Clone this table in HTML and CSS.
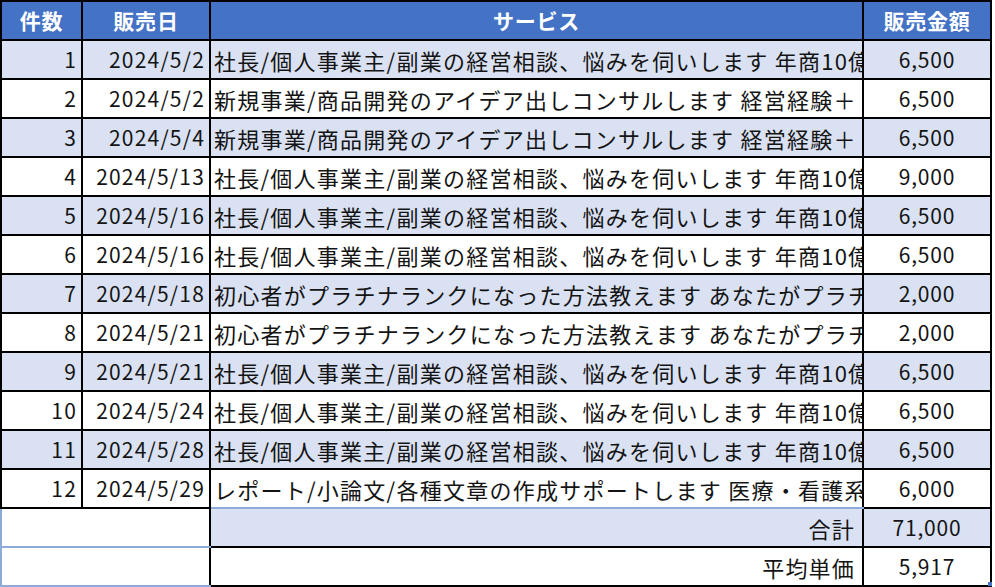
FILE: index.html
```html
<!DOCTYPE html>
<html lang="ja">
<head>
<meta charset="utf-8">
<link rel="stylesheet" href="styles.css">
</head>
<body>
<div class="sheet">
<table class="sales">
  <colgroup>
    <col class="c-no"><col class="c-date"><col class="c-svc"><col class="c-amt">
  </colgroup>
  <thead>
    <tr><th>件数</th><th>販売日</th><th>サービス</th><th>販売金額</th></tr>
  </thead>
  <tbody>
    <tr class="band"><td class="num">1</td><td class="num">2024/5/2</td><td class="svc">社長/個人事業主/副業の経営相談、悩みを伺いします 年商10億円の社長が相談に乗ります</td><td class="amt">6,500</td></tr>
    <tr><td class="num">2</td><td class="num">2024/5/2</td><td class="svc">新規事業/商品開発のアイデア出しコンサルします 経営経験＋ 20年以上</td><td class="amt">6,500</td></tr>
    <tr class="band"><td class="num">3</td><td class="num">2024/5/4</td><td class="svc">新規事業/商品開発のアイデア出しコンサルします 経営経験＋ 20年以上</td><td class="amt">6,500</td></tr>
    <tr><td class="num">4</td><td class="num">2024/5/13</td><td class="svc">社長/個人事業主/副業の経営相談、悩みを伺いします 年商10億円の社長が相談に乗ります</td><td class="amt">9,000</td></tr>
    <tr class="band"><td class="num">5</td><td class="num">2024/5/16</td><td class="svc">社長/個人事業主/副業の経営相談、悩みを伺いします 年商10億円の社長が相談に乗ります</td><td class="amt">6,500</td></tr>
    <tr><td class="num">6</td><td class="num">2024/5/16</td><td class="svc">社長/個人事業主/副業の経営相談、悩みを伺いします 年商10億円の社長が相談に乗ります</td><td class="amt">6,500</td></tr>
    <tr class="band"><td class="num">7</td><td class="num">2024/5/18</td><td class="svc">初心者がプラチナランクになった方法教えます あなたがプラチナランクに</td><td class="amt">2,000</td></tr>
    <tr><td class="num">8</td><td class="num">2024/5/21</td><td class="svc">初心者がプラチナランクになった方法教えます あなたがプラチナランクに</td><td class="amt">2,000</td></tr>
    <tr class="band"><td class="num">9</td><td class="num">2024/5/21</td><td class="svc">社長/個人事業主/副業の経営相談、悩みを伺いします 年商10億円の社長が相談に乗ります</td><td class="amt">6,500</td></tr>
    <tr><td class="num">10</td><td class="num">2024/5/24</td><td class="svc">社長/個人事業主/副業の経営相談、悩みを伺いします 年商10億円の社長が相談に乗ります</td><td class="amt">6,500</td></tr>
    <tr class="band"><td class="num">11</td><td class="num">2024/5/28</td><td class="svc">社長/個人事業主/副業の経営相談、悩みを伺いします 年商10億円の社長が相談に乗ります</td><td class="amt">6,500</td></tr>
    <tr class="last"><td class="num">12</td><td class="num">2024/5/29</td><td class="svc svc-last">レポート/小論文/各種文章の作成サポートします 医療・看護系もお任せください</td><td class="amt">6,000</td></tr>
    <tr class="sum band-sum"><td class="blank" colspan="2"></td><td class="label label-top">合計</td><td class="amt">71,000</td></tr>
    <tr class="sum"><td class="blank" colspan="2"></td><td class="label">平均単価</td><td class="amt">5,917</td></tr>
  </tbody>
</table>
<span class="handle"></span>
</div>
</body>
</html>
```

FILE: styles.css
```css
html, body {
  margin: 0;
  padding: 0;
  background: #ffffff;
}

.sheet {
  position: relative;
  width: 995px;
  height: 587px;
  overflow: hidden;
}

.sales {
  border-collapse: collapse;
  table-layout: fixed;
  width: 992px;
  font-family: "Noto Sans CJK JP", "Noto Sans", sans-serif;
  font-size: 21px;
  color: #141414;
}

.c-no { width: 81px; }
.c-date { width: 128px; }
.c-svc { width: 653px; }
.c-amt { width: 128px; }

.sales th,
.sales td {
  height: 37px;
  padding: 0;
  border: 2px solid #000;
  white-space: nowrap;
  overflow: hidden;
  line-height: 1;
  vertical-align: middle;
}

.sales th {
  background: #4472c4;
  color: #ffffff;
  font-weight: 700;
  text-align: center;
  letter-spacing: 0.8px;
}

.sales tr.band td {
  background: #d9e1f2;
}

.num {
  text-align: right;
  padding-right: 4px !important;
  letter-spacing: 1.2px;
}

.svc {
  text-align: left;
  padding-left: 3px !important;
  text-overflow: clip;
  font-size: 22px;
  letter-spacing: 1.25px;
}

.amt {
  text-align: center;
  letter-spacing: 0.8px;
}

.svc-last {
  border-bottom-color: #8eaadb !important;
}

.sum .blank {
  background: #ffffff;
  border-left-color: #8eaadb;
  border-bottom-color: #8eaadb;
}

.sum .label {
  text-align: right;
  padding-right: 7px !important;
  font-size: 22px;
  letter-spacing: 1.2px;
}

.band-sum .label,
.band-sum .amt {
  background: #d9e1f2;
}

.label-top {
  border-top-color: #8eaadb !important;
}

.handle {
  position: absolute;
  left: 988px;
  top: 582px;
  width: 4px;
  height: 4px;
  background: #4472c4;
}
```
